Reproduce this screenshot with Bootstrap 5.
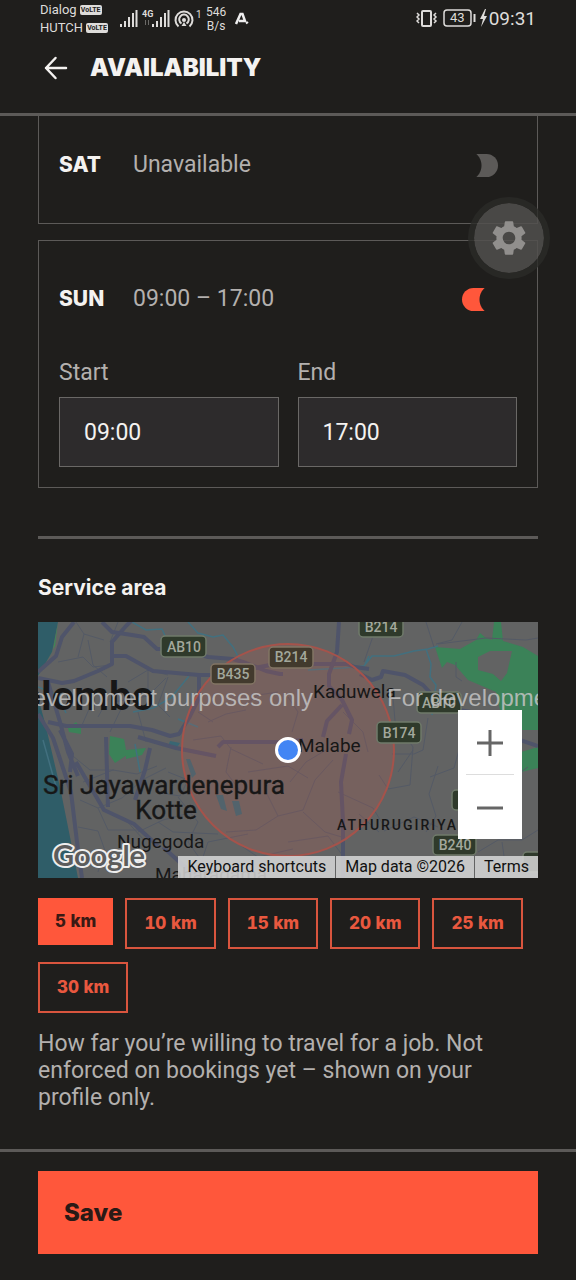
<!DOCTYPE html>
<html lang="en">
<head>
<meta charset="utf-8">
<meta name="viewport" content="width=device-width, initial-scale=1">
<title>Availability</title>
<link href="https://cdn.jsdelivr.net/npm/bootstrap@5.3.0/dist/css/bootstrap.min.css" rel="stylesheet">
<style>
  :root { --ink: #1f1e1c; --line: #5c5a58; --accent: #ff573b; --soft: #b3b0ae; --bright: #f4f2f0; }
  body { background: var(--ink); color: var(--bright); font-family: Roboto, "Liberation Sans", sans-serif; font-size: 23px; line-height: 28px; }
  .gutter { padding-left: 38px; padding-right: 38px; }
  .heavy { font-family: Inter, "Liberation Sans", sans-serif; font-weight: 800; font-variant-numeric: tabular-nums; }
  .soft { color: var(--soft); }
  .status-bar { height: 38px; padding: 0 40px; color: #dedcda; font-size: 13px; line-height: 18px; }
  .status-bar .tiny { font-size: 12px; line-height: 14px; }
  .status-bar .clock { font-size: 19px; }
  .carrier { gap: 3px; }
  .volte { background: #dedcda; color: var(--ink); border-radius: 2px; font-size: 7px; font-weight: 700; line-height: 10px; width: 22px; text-align: center; }
  .signals { margin-left: 12px; }
  .app-head { height: 78px; padding-bottom: 15px; border-bottom: 3px solid var(--line); }
  .app-head h1 { font-size: 24px; line-height: 28px; font-weight: 900; margin-left: 20px; }
  .back { color: var(--bright); width: 28px; height: 28px; line-height: 0; }
  .day-card { border: 1px solid var(--line); padding: 44px 20px 20px; }
  .day-card.clipped { border-top: 0; padding: 35px 20px 44px; }
  .day { width: 74px; font-size: 21px; }
  .form-check-input.toggle { width: 36px; height: 23px; margin: 0 19px 0 0; border: 0; border-radius: 12px; background: radial-gradient(circle at 4px 50%, var(--ink) 15px, var(--line) 16px); }
  .form-check-input.toggle:checked { background: radial-gradient(circle at 33px 50%, var(--ink) 15px, var(--accent) 16px); }
  .time-row { gap: 19px; margin-top: 46px; }
  .time-row label { margin-bottom: 10px; }
  .time-box, .time-box:focus { height: 70px; border: 1px solid #6a6866; border-radius: 0; background: #2d2b2c; color: var(--bright); font-size: 23px; padding: 0 24px; }
  .divider { height: 3px; background: var(--line); opacity: 1; border: 0; margin: 48px 0 35px; }
  h2.section-title { font-family: Inter, sans-serif; font-size: 21px; font-weight: 700; line-height: 28px; margin-bottom: 20px; }
  .area-map { height: 256px; overflow: hidden; background: #626262; }
  .area-map svg.tiles { width: 100%; height: 100%; display: block; }
  .tiles { font-family: Roboto, sans-serif; }
  .zoomer { top: 88px; right: 16px; width: 64px; background: #fff; padding: 0 8px; }
  .zoomer button { height: 64px; border: 0; background: none; padding: 0; }
  .zoomer button + button { border-top: 1px solid #ddd; height: 65px; }
  .credits { right: 0; bottom: 0; height: 22px; gap: 1px; font-size: 16px; line-height: 22px; }
  .credits button, .credits span, .credits a { background: #d8d8d8d9; color: #111; border: 0; padding: 0 9px; text-decoration: none; white-space: nowrap; }
  .chips { gap: 13px 12px; margin-top: 20px; }
  .chip { font-size: 17px; line-height: 22px; color: #e9583f; border: 2px solid #d9553e; background: none; padding: 12px 17px 13px; }
  .chip.on { background: var(--accent); color: #3a1a14; border: 0; }
  .hint { margin: 17px 0 38px; line-height: 27px; }
  .foot { border-top: 3px solid var(--line); padding-top: 19px; padding-bottom: 26px; }
  .save { height: 83px; background: var(--accent); color: #2a1a16; border: 0; font-size: 24px; padding: 0 26px; text-align: left; }
  .assist { position: absolute; top: 197px; right: 26px; width: 82px; height: 82px; border-radius: 50%; border: 6px solid #2b2a28cc; background: #51504ed9; background-clip: padding-box; padding: 0; line-height: 0; }
</style>
</head>
<body class="position-relative">
<div class="status-bar d-flex align-items-center">
  <div>
    <div class="carrier d-flex align-items-center">Dialog <span class="volte">VoLTE</span></div>
    <div class="carrier d-flex align-items-center">HUTCH <span class="volte">VoLTE</span></div>
  </div>
  <svg class="signals" width="82" height="30" viewBox="0 0 82 30" fill="#dedcda" aria-hidden="true">
    <path d="M0 20h2v3H0zM4 17h2v6H4zM8 13h2v10H8zM12 9h2v14h-2zM15.500 6h2v17h-2z"/>
    <text x="22" y="13" font-size="9" font-weight="700">4G</text>
    <path d="M25 16h1v5h-1zM28 16h1v5h-1z" opacity=".4"/>
    <path d="M32 20h2v3h-2zM36 17h2v6h-2zM40 13h2v10h-2zM44 9h2v14h-2zM47.500 6h2v17h-2z"/>
    <g fill="none" stroke="#dedcda" stroke-width="2"><path d="M58.500 22.500a8.500 8.500 0 1 1 11 0M61.500 19.500a4.800 4.800 0 1 1 5 0"/></g>
    <circle cx="64" cy="16" r="2"/><path d="M64 18l2.500 4h-5z"/>
    <text x="76" y="14" font-size="10">1</text>
  </svg>
  <div class="tiny text-center ms-1">546<br>B/s</div>
  <svg class="ms-2" width="16" height="16" viewBox="0 0 16 16" aria-hidden="true"><path d="M2 13L6.500 3H8.500l2.500 7H5" fill="none" stroke="#eee" stroke-width="2.500"/><path d="M12 12.500l2-1.500" stroke="#eee" stroke-width="2"/></svg>
  <svg class="ms-auto" width="73" height="24" viewBox="0 0 73 24" aria-hidden="true">
    <g fill="none" stroke="#dedcda" stroke-width="2">
      <rect x="6" y="4" width="9" height="15" rx="1"/>
      <path d="M1 6l2 2-2 2 2 2-2 2 2 2M20 6l-2 2 2 2-2 2 2 2-2 2" stroke-width="1.500"/>
      <rect x="28" y="3" width="27" height="16" rx="3" stroke-width="1.500"/>
      <path d="M58.500 7v8"/>
    </g>
    <text x="34" y="15" font-size="13" fill="#dedcda">43</text>
    <path d="M69 2l-5 10h3l-2 8 6-11h-3l2-7z" fill="#dedcda"/>
  </svg>
  <span class="clock">09:31</span>
</div>

<header class="app-head d-flex align-items-center gutter">
  <button type="button" class="btn back border-0 p-0 ms-1" aria-label="Back">
    <svg width="24" height="24" viewBox="0 0 24 24" fill="none" stroke="currentColor" stroke-width="2.500" stroke-linecap="round" stroke-linejoin="round"><path d="M22 12H2M11.500 2L2 12l9.500 10"/></svg>
  </button>
  <h1 class="heavy mb-0">AVAILABILITY</h1>
</header>

<main class="gutter">
  <section class="day-card clipped d-flex align-items-center">
    <label class="heavy day" for="sat">SAT</label>
    <span class="soft flex-grow-1">Unavailable</span>
    <input class="form-check-input toggle" type="checkbox" role="switch" id="sat">
  </section>

  <section class="day-card mt-3">
    <div class="d-flex align-items-center">
      <label class="heavy day" for="sun">SUN</label>
      <span class="soft flex-grow-1">09:00 – 17:00</span>
      <input class="form-check-input toggle" type="checkbox" role="switch" id="sun" checked>
    </div>
    <div class="d-flex time-row">
      <div class="flex-fill">
        <label class="soft d-block" for="start">Start</label>
        <input class="form-control time-box" id="start" type="text" value="09:00">
      </div>
      <div class="flex-fill">
        <label class="soft d-block" for="end">End</label>
        <input class="form-control time-box" id="end" type="text" value="17:00">
      </div>
    </div>
  </section>

  <hr class="divider">

  <h2 class="section-title">Service area</h2>
  <div class="area-map position-relative">
    <svg class="tiles" viewBox="0 0 500 256" preserveAspectRatio="xMidYMid slice" aria-label="Map of the service area">
      <rect width="500" height="256" fill="#626363"/>
      <!-- sea and parks -->
      <path d="M0 0H20L14 30 0 54zM0 75L8 105 22 165 34 225 40 256H0z" fill="#2f5d68"/>
      <path d="M20 0l-5 28L3 50 17 24z" fill="#3c8a56"/>
      <g fill="#3b8258">
        <path d="M397 25l25 2 16-9 4-7 6 5 6 2 2-18h7l2 19 20 6 15 9v74h-16V98l-22-10-4-18-28-12-13-15-8-3-5 6z"/>
        <path d="M483 130l17-5v21l-17 4zM30 106l8-6 5 6v6l-12-2zM72 114l14 3 3 16-12 8-6-9zM88 128l20-2-4 7-16 4z"/>
      </g>
      <path d="M440 35l12-6 22 0-5 22-6 8-8-7-15-4z" fill="#626363"/>
      <g fill="#396673"><path d="M148 137l4 0 6 15-4 4zM178 173l7 0 4 16-6-2zM194 179l7 0 3 13-6 2zM132 119l10 2-4 6-8-2z"/></g>
      <!-- streams -->
      <g fill="none" stroke="#42707f" stroke-width="1.500">
        <path d="M94 0l14 8 16-1 4 9M150 0l10 11 15 4 10-2 10 12 8 15M270 48l35-2 21-2 8-10 22 0 20-5 14-2 10-3M388 27l5 15-1 13 6 8-4 30M327 42l4-8"/>
        <path d="M0 65l20 8 8 18M95 90l20-4 18-10 18-22M160 105l-20-8M5 118l14 50M102 150l-5-28"/>
      </g>
      <!-- minor roads -->
      <g fill="none" stroke="#545a66" stroke-width="1">
        <path d="M38 0l8 12 20 6M46 12l-6 23M20 40l25-5 10 10 18-2M80 0l-8 20M50 18l5 25 14 12M90 60l20-12 20 5M75 80l35-6 18-18M60 95l10-18M130 55l-10 28 12 12M44 103l8-18M110 48v25M84 85l-12 25M100 90l8 30"/>
        <path d="M30 130l22 18 24 0M45 160l30-12 24 4 20-8M42 178l18 8 10 22 32 0M40 205l20 4 10 28M60 186l24-10 20-18 24-12M85 195l20 22 4 26M100 210l25-12 30-8M130 150l20 8-8 16-25-4M120 200l15 10 45 2M140 175l20 25-10 20 18 25M160 250l10-30 40-8M40 235l20 10 30-6M60 250l5-18"/>
      </g>
      <g fill="none" stroke="#545a66" stroke-width="1">
        <path d="M170 100l18-8 20-4M155 118l28-4 10 13 32 15M160 90l15 10M205 85l15-12 20-3M250 75l10 15-6 20M193 125l-5 25 15 20M210 150l40-6 20 12M228 170l12 24-22 14-30 2M240 194l25-6 12-30 18-20M265 190l22 20 20 6M252 160l16-20 20-12M300 170l35 16 12 20M250 220l40-6 15 20M190 215l30 20 35-8"/>
        <path d="M305 90l20 20 5 20M355 75l2 24 18 26-3 38-22 4-9-14M341 70l-14-15M390 96l-5 32-9 4-22 0M360 150l15-22M400 144l-9 28 7 22-10 16M392 155l24-9 5-18M341 210l-20-18M400 205l-24-10-30 14M440 215l-20-12M418 40v15l6 4M424 0l-10 18-16 4M388 0l8 25M400 22l48-6 40 2 12-2M340 0l-14 40M490 145l-12 8M440 230l20-12 24 0 16-10M464 220l2 14"/>
      </g>
      <!-- main roads -->
      <g fill="none" stroke="#4f546a" stroke-width="4" stroke-linejoin="round">
        <path d="M0 50L18 34 24 15 36 0M0 56l24 5 12-2 24-10 14-7 0-22 14-16 10-10M72 34l16 0 27 15 46 4 18 0 18-1 20-6 25-5 25 1 42 0 8 3 14 2"/>
        <path d="M64 0l10 10 20 3 12 2 13 12 26 0 25 8 25 2 13 4 20 8 14 3 3 0M161 54v22l-10 20-10 16-9 2-18-6-22-4H28l-18-4M301 0l-2 30-8 22 0 12 13 14 10 20-3 14M304 83l-15 16-4 16"/>
        <path d="M322 52l12 6 9-3 2-6 22 4 18 10 12 13 24 12 24 4 25 22 30 10M180 125l5-5 28 0 30 0 22-2M100 115l38 11 40 8M308 132l-5 28 2 40v56"/>
        <path d="M0 92l15 24 18 54 6 50 5 36M10 60l12 40 8 30 10 24M22 108l12 24-2 18M38 140l28 48 30 14 24 22M68 115l2 70M112 126l-5 22-10 30M125 225l22 20 14 10"/>
      </g>
      <!-- travel radius -->
      <circle cx="250" cy="128" r="106" fill="#ff573b" fill-opacity=".13" stroke="#a5534b" stroke-width="2"/>
      <!-- road shields -->
      <g font-size="14" font-weight="500" fill="#a3a89c" text-anchor="middle" stroke-width="1.500">
        <g fill="#2f3a2b" stroke="#707b6b">
          <rect x="123" y="14" width="45" height="21" rx="4"/><rect x="321" y="-5" width="44" height="20" rx="4"/><rect x="339" y="100" width="44" height="21" rx="4"/><rect x="379" y="70" width="44" height="21" rx="4"/><rect x="395" y="213" width="43" height="20" rx="4"/><rect x="414" y="168" width="30" height="20" rx="4"/><rect x="485" y="230" width="30" height="20" rx="4"/>
        </g>
        <g fill="#423a2d" stroke="#827564"><rect x="231" y="25" width="44" height="21" rx="4"/><rect x="173" y="42" width="44" height="20" rx="4"/></g>
        <g stroke="none"><text x="146" y="30">AB10</text><text x="343" y="10">B214</text><text x="361" y="116">B174</text><text x="401" y="86">AB10</text><text x="417" y="228">B240</text><text x="253" y="40">B214</text><text x="195" y="57">B435</text></g>
      </g>
      <!-- places -->
      <g fill="#171717">
        <text x="116" y="88" font-size="40" font-weight="700" text-anchor="end">Colombo</text>
        <g text-anchor="middle" font-size="26" stroke="#171717" stroke-width=".4"><text x="126" y="172">Sri Jayawardenepura</text><text x="128" y="197">Kotte</text></g>
        <g font-size="19"><text x="79" y="226">Nugegoda</text><text x="117" y="259">Maharagama</text><text x="275" y="76">Kaduwela</text><text x="260" y="130">Malabe</text></g>
        <text x="299" y="208" font-size="14" font-weight="500" letter-spacing="2">ATHURUGIRIYA</text>
      </g>
      <g font-family="Liberation Sans, sans-serif" font-size="24" fill="#c4c4c4" fill-opacity=".85"><text x="275" y="84" text-anchor="end">For development purposes only</text><text x="349" y="84">For development purposes only</text></g>
      <circle cx="250" cy="128" r="11.500" fill="#4285f4" stroke="#fff" stroke-width="3"/>
      <text x="15" y="244" font-family="Lato, sans-serif" font-size="29" font-weight="700" fill="#5c5c5c" stroke="#eee" stroke-width="4" stroke-linejoin="round" paint-order="stroke">Google</text>
    </svg>
    <div class="zoomer position-absolute d-flex flex-column">
      <button type="button" aria-label="Zoom in"><svg width="26" height="26" viewBox="0 0 26 26" stroke="#666" stroke-width="3"><path d="M0 13h26M13 0v26"/></svg></button>
      <button type="button" aria-label="Zoom out"><svg width="26" height="26" viewBox="0 0 26 26" stroke="#666" stroke-width="3"><path d="M0 13h26"/></svg></button>
    </div>
    <div class="credits position-absolute d-flex">
      <button type="button">Keyboard shortcuts</button><span>Map data ©2026</span><a href="#">Terms</a>
    </div>
  </div>

  <div class="chips d-flex flex-wrap align-items-start">
    <button type="button" class="chip heavy on" aria-pressed="true">5 km</button>
    <button type="button" class="chip heavy">10 km</button>
    <button type="button" class="chip heavy">15 km</button>
    <button type="button" class="chip heavy">20 km</button>
    <button type="button" class="chip heavy">25 km</button>
    <button type="button" class="chip heavy">30 km</button>
  </div>
  <p class="hint soft">How far you’re willing to travel for a job. Not enforced on bookings yet – shown on your profile only.</p>
</main>

<footer class="foot gutter">
  <button type="submit" class="save heavy w-100">Save</button>
</footer>

<button type="button" class="assist" aria-label="Settings">
  <svg width="42" height="42" viewBox="0 0 24 24" fill="#918f8d"><path d="M19.140 12.940c.04-.3.060-.61.060-.94 0-.32-.02-.64-.07-.94l2.030-1.580a.49.49 0 0 0 .12-.61l-1.920-3.320a.488.488 0 0 0-.59-.22l-2.390.96c-.5-.38-1.030-.7-1.620-.94l-.36-2.540a.484.484 0 0 0-.48-.41h-3.840c-.24 0-.43.17-.47.41l-.36 2.540c-.59.24-1.130.57-1.620.94l-2.390-.96c-.22-.08-.47 0-.59.22L2.740 8.870c-.12.21-.08.47.12.61l2.030 1.580c-.05.3-.09.63-.09.94s.02.64.07.94l-2.030 1.580a.49.49 0 0 0-.12.61l1.920 3.320c.12.22.37.29.59.22l2.390-.96c.5.38 1.030.7 1.620.94l.36 2.540c.05.24.24.41.48.41h3.840c.24 0 .44-.17.47-.41l.36-2.540c.59-.24 1.130-.56 1.620-.94l2.390.96c.22.08.47 0 .59-.22l1.920-3.320c.12-.22.07-.47-.12-.61l-2.010-1.580zM12 15.600A3.610 3.610 0 0 1 8.400 12c0-1.980 1.620-3.600 3.600-3.600s3.600 1.620 3.600 3.600-1.620 3.600-3.600 3.600z"/></svg>
</button>
<script src="https://cdn.jsdelivr.net/npm/bootstrap@5.3.0/dist/js/bootstrap.bundle.min.js"></script>
</body>
</html>
